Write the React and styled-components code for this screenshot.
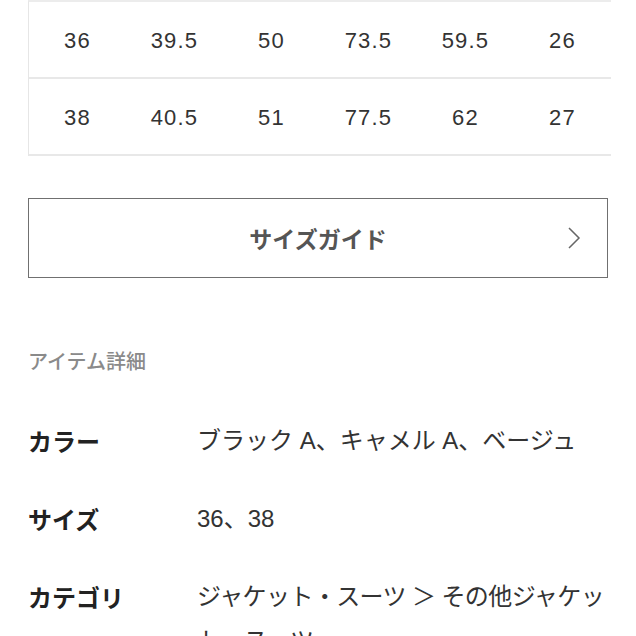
import React from "react";
import styled, { createGlobalStyle } from "styled-components";

const GlobalStyle = createGlobalStyle`
  body {
    margin: 0;
    background: #fff;
    font-family: "Liberation Sans", "Noto Sans CJK JP", sans-serif;
    color: #333;
  }
`;

const Page = styled.div`
  padding: 0 28px;
  width: 636px;
  box-sizing: border-box;
  overflow: hidden;
`;

const Table = styled.div`
  width: 582px;
  border-left: 1px solid #e6e6e6;
  border-top: 2px solid #ececec;
`;

const Row = styled.div`
  display: grid;
  grid-template-columns: repeat(6, 97px);
  height: 77px;
  border-bottom: 2px solid #e8e8e8;
  box-sizing: border-box;
`;

const Cell = styled.div`
  display: flex;
  align-items: center;
  justify-content: center;
  padding-top: 3px;
  font-size: 22px;
  letter-spacing: 1.2px;
  color: #333;
`;

const GuideButton = styled.div`
  margin-top: 42px;
  height: 80px;
  width: 580px;
  box-sizing: border-box;
  border: 1.5px solid #707070;
  display: flex;
  align-items: center;
  justify-content: center;
  position: relative;
  font-family: "Noto Sans CJK JP", sans-serif;
  font-weight: 700;
  font-size: 23px;
  color: #555;
`;

const Chevron = styled.svg`
  position: absolute;
  right: 26px;
  top: 50%;
  transform: translateY(-50%);
`;

const SectionTitle = styled.div`
  margin-top: 68px;
  font-family: "Noto Sans CJK JP", sans-serif;
  font-weight: 500;
  font-size: 20px;
  color: #8a8a8a;
`;

const DetailList = styled.div`
  margin-top: 44px;
  display: flex;
  flex-direction: column;
  gap: 34px;
`;

const DetailRow = styled.div`
  display: grid;
  grid-template-columns: 169px 412px;
  font-family: "Noto Sans CJK JP", sans-serif;
  font-size: 24px;
  line-height: 44px;
`;

const Label = styled.div`
  font-weight: 700;
  color: #222;
`;

const Value = styled.div`
  color: #333;
  font-family: "Liberation Sans", "Noto Sans CJK JP", sans-serif;
  letter-spacing: ${(p) => (p.$tight ? "-0.6px" : "0")};
`;

const rows = [
  ["36", "39.5", "50", "73.5", "59.5", "26"],
  ["38", "40.5", "51", "77.5", "62", "27"],
];

const details = [
  ["カラー", "ブラック A、キャメル A、ベージュ"],
  ["サイズ", "36、38"],
  ["カテゴリ", "ジャケット・スーツ ＞ その他ジャケット・スーツ", true],
];

export default function App() {
  return (
    <Page>
      <GlobalStyle />
      <Table>
        {rows.map((r, i) => (
          <Row key={i}>
            {r.map((c, j) => (
              <Cell key={j}>{c}</Cell>
            ))}
          </Row>
        ))}
      </Table>
      <GuideButton>
        サイズガイド
        <Chevron width="14" height="24" viewBox="0 0 14 24">
          <path d="M2 2 L12 12 L2 22" fill="none" stroke="#666" strokeWidth="1.5" />
        </Chevron>
      </GuideButton>
      <SectionTitle>アイテム詳細</SectionTitle>
      <DetailList>
        {details.map(([k, v, tight]) => (
          <DetailRow key={k}>
            <Label>{k}</Label>
            <Value $tight={tight}>{v}</Value>
          </DetailRow>
        ))}
      </DetailList>
    </Page>
  );
}
